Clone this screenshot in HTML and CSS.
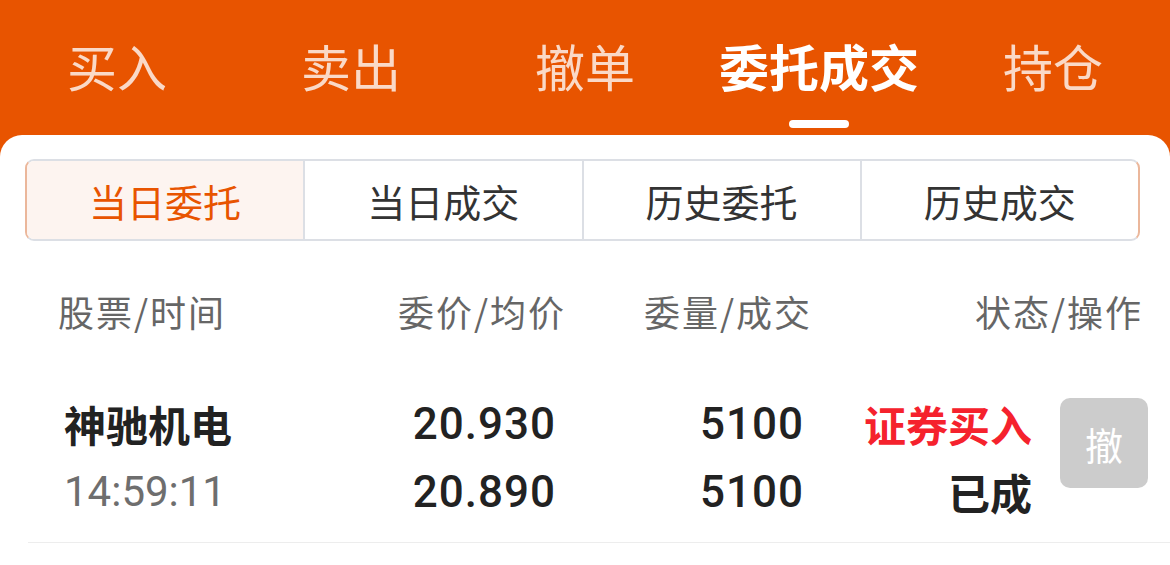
FILE: index.html
```html
<!DOCTYPE html>
<html lang="zh-CN">

<head>
    <meta charset="UTF-8">
    <meta name="viewport" content="width=device-width, initial-scale=1.0">
    <title>委托成交</title>
    <link rel="stylesheet" href="styles.css">
</head>
<body>
    <!-- top trade tabs -->
    <div class="top-tabs">
        <div class="top-tab">买入</div>
        <div class="top-tab">卖出</div>
        <div class="top-tab">撤单</div>
        <div class="top-tab active">委托成交<span class="indicator"></span></div>
        <div class="top-tab">持仓</div>
    </div>

    <div class="card">
        <div class="segment">
            <div class="seg-item active">当日委托</div>
            <div class="seg-item">当日成交</div>
            <div class="seg-item">历史委托</div>
            <div class="seg-item">历史成交</div>
        </div>

        <div class="list-head">
            <div class="col-left">股票/时间</div>
            <div class="col-right">委价/均价</div>
            <div class="col-right">委量/成交</div>
            <div class="col-right">状态/操作</div>
        </div>

        <div class="order-row">
            <div class="cell-left">
                <div class="stock-name">神驰机电</div>
                <div class="stock-time">14:59:11</div>
            </div>
            <div class="cell-right num">
                <div>20.930</div>
                <div>20.890</div>
            </div>
            <div class="cell-right num">
                <div>5100</div>
                <div>5100</div>
            </div>
            <div class="cell-right status">
                <div class="buy">证券买入</div>
                <div>已成</div>
            </div>
            <div class="cell-btn">
                <button class="cancel-btn">撤</button>
            </div>
        </div>
    </div>
</body>

</html>
```

FILE: styles.css
```css
html, body {
    margin: 0;
    height: 565px;
    overflow: hidden;
}

body {
    background-color: #e85400;
    font-family: "Noto Sans CJK SC", sans-serif;
}

.top-tabs {
    display: grid;
    grid-template-columns: repeat(5, 1fr);
    height: 135px;
}

.top-tab {
    position: relative;
    text-align: center;
    padding-top: 40px;
    font-size: 50px;
    line-height: 50px;
    color: rgba(255, 255, 255, 0.78);
}

.top-tab.active {
    color: #fff;
    font-weight: bold;
}

.indicator {
    position: absolute;
    left: 50%;
    top: 120px;
    width: 60px;
    height: 8px;
    margin-left: -30px;
    border-radius: 4px;
    background-color: #fff;
}

.card {
    background-color: #fff;
    border-radius: 22px 22px 0 0;
    height: 430px;
    padding-top: 24px;
}

.segment {
    display: flex;
    margin: 0 30px 0 25px;
    height: 82px;
    box-sizing: border-box;
    border: 2px solid #dcdfe5;
    border-left-color: #ebb79b;
    border-right-color: #ebb79b;
    border-radius: 9px;
    overflow: hidden;
}

.seg-item {
    flex: 1;
    display: flex;
    align-items: center;
    justify-content: center;
    font-size: 38px;
    color: #333;
    border-left: 2px solid #dcdfe5;
}

.seg-item:first-child {
    border-left: none;
}

.seg-item.active {
    color: #e85400;
    background-color: #fdf4f0;
}

.list-head {
    display: grid;
    grid-template-columns: 288px 220px 246px 331px;
    padding: 53px 25px 62px 58px;
    font-size: 36px;
    line-height: 34px;
    letter-spacing: 2px;
    color: #666;
}

.col-right {
    text-align: right;
}

.order-row {
    display: grid;
    grid-template-columns: 272px 220px 248px 228px 116px;
    margin-left: 28px;
    padding: 0 22px 16px 36px;
    border-bottom: 1px solid #ededed;
    font-size: 42px;
    line-height: 68px;
    color: #222;
}

.stock-name {
    font-weight: bold;
}

.stock-time {
    font-family: Roboto, "Liberation Sans", sans-serif;
    font-size: 42px;
    color: #6e6e6e;
}

.cell-right {
    text-align: right;
}

.num {
    font-family: Roboto, "Liberation Sans", sans-serif;
    font-weight: 500;
    font-size: 44px;
    letter-spacing: 1px;
}

.status {
    font-weight: bold;
}

.buy {
    color: #f5222d;
}

.cell-btn {
    display: flex;
    justify-content: flex-end;
    align-items: flex-start;
    padding-top: 8px;
}

.cancel-btn {
    width: 88px;
    height: 90px;
    border: none;
    border-radius: 10px;
    background-color: #cccccc;
    color: #fff;
    font-family: "Noto Sans CJK SC", sans-serif;
    font-size: 38px;
    padding: 0;
}
```
